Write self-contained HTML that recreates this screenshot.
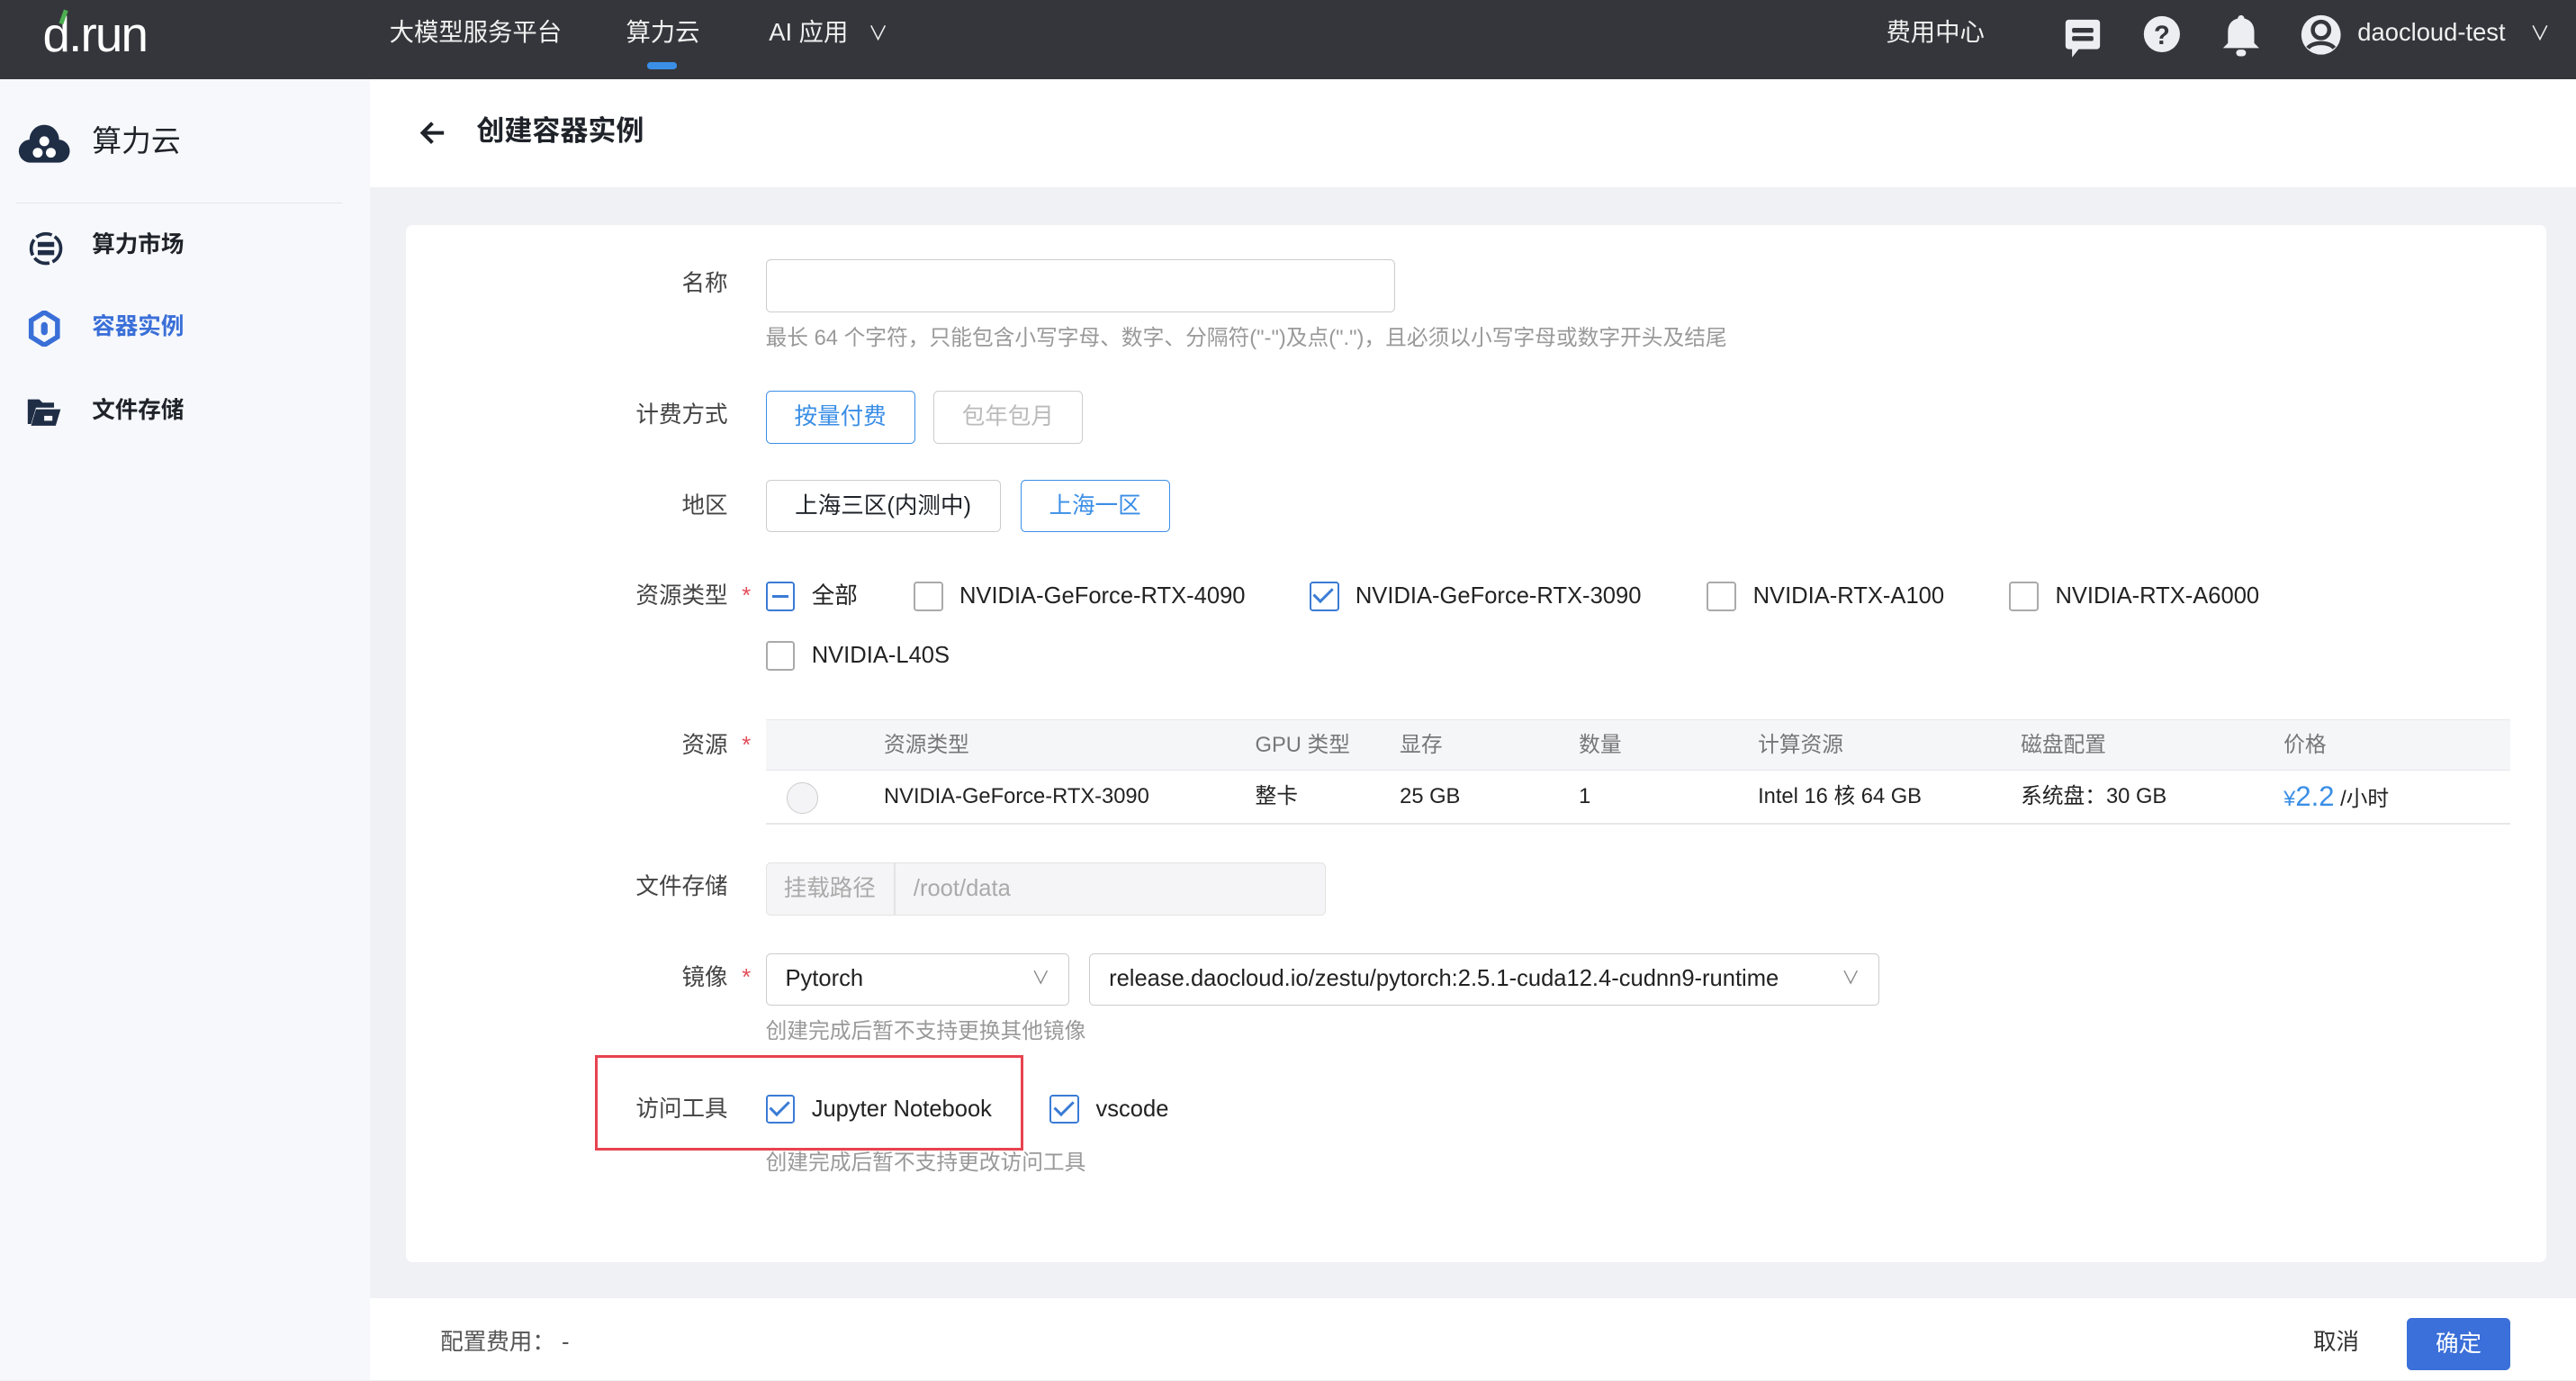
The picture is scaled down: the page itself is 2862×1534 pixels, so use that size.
<!DOCTYPE html>
<html><head><meta charset="utf-8">
<style>
html{zoom:1.8253}
*{box-sizing:border-box;margin:0;padding:0}
body{width:1568px;height:840px;overflow:hidden;position:relative;background:#f0f1f4;font-family:"Liberation Sans","Noto Sans CJK SC",sans-serif;font-size:14px;line-height:18px;color:#1f2329}
.a{position:absolute}
.top{left:0;top:0;width:1568px;height:48px;background:#35363b;color:#fff}
.top .t{position:absolute;top:11px;font-size:15px;color:#f0f0f0}
.side{left:0;top:48px;width:225px;height:792px;background:#f6f8fb}
.lbl{position:absolute;right:1125px;font-size:14px;color:#444;text-align:right;white-space:nowrap}
.req::after{content:"*";color:#e34d59;position:absolute;right:-14px;top:0px}
.btn{position:absolute;height:32px;border:1px solid #ccc;border-radius:3px;display:flex;align-items:center;justify-content:center;font-size:14px}
.cb{position:absolute;width:18px;height:18px;border:1.5px solid #aaa;border-radius:2px;background:#fff}
.cb.on{border-color:#3a7bd5}
.cb.on::after{content:"";position:absolute;left:4px;top:0px;width:5px;height:10px;border:solid #3a7bd5;border-width:0 2px 2px 0;transform:rotate(45deg)}
.ct{position:absolute;font-size:14px;color:#222}
.hint{position:absolute;font-size:13px;color:#999}
.th{position:absolute;top:445px;font-size:13px;color:#777}
.td{position:absolute;top:476px;font-size:13px;color:#222}
</style></head><body>
<div class="a top">
  <div class="a" style="left:26px;top:4px;font-size:30px;line-height:34px;color:#fff;letter-spacing:-1px">d.run</div>
  <div class="a" style="left:37px;top:6px;width:3px;height:9px;background:#4caf50;transform:rotate(20deg)"></div>
  <div class="t" style="left:237px">大模型服务平台</div>
  <div class="t" style="left:381px">算力云</div>
  <div class="a" style="left:394px;top:38px;width:18px;height:4px;border-radius:2px;background:#3a8ee6"></div>
  <div class="t" style="left:468px">AI 应用 <span style="margin-left:8px;font-size:12px">∨</span></div>
  <div class="t" style="left:1148px">费用中心</div>
  <svg class="a" style="left:1256px;top:11px" width="23" height="25" viewBox="0 0 23 25"><path d="M3 1h17a2 2 0 0 1 2 2v14a2 2 0 0 1-2 2H9l-4 5v-5H3a2 2 0 0 1-2-2V3a2 2 0 0 1 2-2z" fill="#eceef2"/><rect x="5" y="6" width="13" height="3" rx="1" fill="#35363b"/><rect x="5" y="11" width="13" height="3" rx="1" fill="#35363b"/></svg>
  <svg class="a" style="left:1304px;top:9px" width="24" height="24" viewBox="0 0 24 24"><circle cx="12" cy="12" r="11" fill="#eceef2"/><text x="12" y="18" font-size="16" font-weight="bold" text-anchor="middle" fill="#35363b" font-family="Liberation Sans">?</text></svg>
  <svg class="a" style="left:1352px;top:8px" width="24" height="27" viewBox="0 0 24 27"><path d="M12 1c1 0 2 1 2 2 4 1 6 4 6 8v7l3 3H1l3-3v-7c0-4 2-7 6-8 0-1 1-2 2-2z" fill="#eceef2"/><rect x="9" y="22" width="6" height="4" rx="2" fill="#eceef2"/></svg>
  <svg class="a" style="left:1400px;top:8px" width="26" height="26" viewBox="0 0 26 26"><circle cx="13" cy="13" r="12" fill="#eceef2"/><circle cx="13" cy="10" r="5" fill="none" stroke="#35363b" stroke-width="2.5"/><path d="M5 21c3-4 13-4 16 0" fill="none" stroke="#35363b" stroke-width="2.5"/></svg>
  <div class="t" style="left:1435px;font-size:15px">daocloud-test</div>
  <div class="t" style="left:1540px;font-size:12px;top:12px">∨</div>
</div>
<div class="a side">
  <svg class="a" style="left:11px;top:26px" width="32" height="26" viewBox="0 0 32 26"><path d="M8 25a7 7 0 0 1-1-14 9 9 0 0 1 18 0 7 7 0 0 1-1 14z" fill="#1f2d45"/><circle cx="16" cy="12" r="3" fill="#fff"/><circle cx="12" cy="19" r="3" fill="#fff"/><circle cx="20" cy="19" r="3" fill="#fff"/></svg>
  <div class="a" style="left:56px;top:27px;font-size:18px;line-height:22px;color:#1f2329">算力云</div>
  <div class="a" style="left:10px;top:75px;width:198px;height:1px;background:#e3e5ea"></div>
  <svg class="a" style="left:17px;top:92px" width="22" height="22" viewBox="0 0 22 22"><circle cx="11" cy="11" r="9" fill="none" stroke="#1f2d45" stroke-width="2" stroke-dasharray="10 2"/><rect x="6" y="7" width="10" height="3" fill="#1f2d45"/><rect x="6" y="12" width="10" height="3" fill="#1f2d45"/></svg>
  <div class="a" style="left:56px;top:92px;font-size:14px;font-weight:bold;color:#1f2329">算力市场</div>
  <svg class="a" style="left:17px;top:141px" width="20" height="22" viewBox="0 0 20 22"><path d="M10 1l8 5v10l-8 5-8-5V6z" fill="none" stroke="#3a6fd8" stroke-width="3"/><rect x="8" y="7" width="4" height="8" rx="2" fill="#3a6fd8"/></svg>
  <div class="a" style="left:56px;top:142px;font-size:14px;font-weight:bold;color:#3a6fd8">容器实例</div>
  <svg class="a" style="left:16px;top:193px" width="22" height="19" viewBox="0 0 22 19"><path d="M1 2h7l2 2h7v3H6L3 17H1z" fill="#1f2d45"/><path d="M6 8h15l-3 10H3z" fill="#1f2d45"/><rect x="11" y="12" width="5" height="3" fill="#f6f8fb"/></svg>
  <div class="a" style="left:56px;top:193px;font-size:14px;font-weight:bold;color:#1f2329">文件存储</div>
</div>
<div class="a" style="left:225px;top:48px;width:1343px;height:66px;background:#fff"></div>
<svg class="a" style="left:254px;top:73px" width="18" height="16" viewBox="0 0 18 16"><path d="M16 8H3M9 2L3 8l6 6" fill="none" stroke="#1f2329" stroke-width="2.2"/></svg>
<div class="a" style="left:290px;top:70px;font-size:17px;line-height:20px;font-weight:bold">创建容器实例</div>
<div class="a" style="left:247px;top:137px;width:1303px;height:631px;background:#fff;border-radius:4px"></div>

<div class="lbl" style="top:164px">名称</div>
<div class="a" style="left:466px;top:158px;width:383px;height:32px;border:1px solid #ccc;border-radius:3px"></div>
<div class="hint" style="left:466px;top:197px">最长 64 个字符，只能包含小写字母、数字、分隔符("-")及点(".")，且必须以小写字母或数字开头及结尾</div>

<div class="lbl" style="top:244px">计费方式</div>
<div class="btn" style="left:466px;top:238px;width:91px;border-color:#3a8ee6;color:#3a8ee6">按量付费</div>
<div class="btn" style="left:568px;top:238px;width:91px;color:#bbb">包年包月</div>

<div class="lbl" style="top:299px">地区</div>
<div class="btn" style="left:466px;top:292px;width:143px">上海三区(内测中)</div>
<div class="btn" style="left:621px;top:292px;width:91px;border-color:#3a8ee6;color:#3a8ee6">上海一区</div>

<div class="lbl req" style="top:354px">资源类型</div>
<div class="cb" style="left:466px;top:354px;border-color:#3a7bd5"></div>
<div class="a" style="left:470px;top:362px;width:10px;height:2px;background:#3a7bd5"></div>
<div class="ct" style="left:494px;top:354px">全部</div>
<div class="cb" style="left:556px;top:354px"></div><div class="ct" style="left:584px;top:354px">NVIDIA-GeForce-RTX-4090</div>
<div class="cb on" style="left:797px;top:354px"></div><div class="ct" style="left:825px;top:354px">NVIDIA-GeForce-RTX-3090</div>
<div class="cb" style="left:1039px;top:354px"></div><div class="ct" style="left:1067px;top:354px">NVIDIA-RTX-A100</div>
<div class="cb" style="left:1223px;top:354px"></div><div class="ct" style="left:1251px;top:354px">NVIDIA-RTX-A6000</div>
<div class="cb" style="left:466px;top:390px"></div><div class="ct" style="left:494px;top:390px">NVIDIA-L40S</div>

<div class="lbl req" style="top:445px">资源</div>
<div class="a" style="left:466px;top:438px;width:1062px;height:31px;background:#f5f6f8;border-top:1px solid #e8e8e8;border-bottom:1px solid #e8e8e8"></div>
<div class="a" style="left:466px;top:501px;width:1062px;height:1px;background:#e8e8e8"></div>
<div class="th" style="left:538px">资源类型</div><div class="th" style="left:764px">GPU 类型</div><div class="th" style="left:852px">显存</div><div class="th" style="left:961px">数量</div><div class="th" style="left:1070px">计算资源</div><div class="th" style="left:1230px">磁盘配置</div><div class="th" style="left:1390px">价格</div>
<div class="a" style="left:479px;top:476px;width:19px;height:19px;border:1px solid #ccc;border-radius:50%;background:#f4f4f6"></div>
<div class="td" style="left:538px">NVIDIA-GeForce-RTX-3090</div><div class="td" style="left:764px">整卡</div><div class="td" style="left:852px">25 GB</div><div class="td" style="left:961px">1</div><div class="td" style="left:1070px">Intel 16 核 64 GB</div><div class="td" style="left:1230px">系统盘：30 GB</div>
<div class="td" style="left:1390px;top:475px;line-height:20px"><span style="color:#3a8ee6;font-size:13px">¥</span><span style="color:#3a8ee6;font-size:17px">2.2</span> /小时</div>

<div class="lbl" style="top:531px">文件存储</div>
<div class="a" style="left:466px;top:525px;width:341px;height:32px;background:#f5f5f7;border:1px solid #e3e3e3;border-radius:3px"></div>
<div class="a" style="left:544px;top:525px;width:1px;height:32px;background:#e3e3e3"></div>
<div class="hint" style="left:477px;top:532px;font-size:14px;color:#aaa">挂载路径</div>
<div class="hint" style="left:556px;top:532px;font-size:14px;color:#aaa">/root/data</div>

<div class="lbl req" style="top:586px">镜像</div>
<div class="a" style="left:466px;top:580px;width:185px;height:32px;border:1px solid #ccc;border-radius:3px"></div>
<div class="ct" style="left:478px;top:587px">Pytorch</div>
<div class="ct" style="left:628px;top:587px;color:#888;font-size:11px">∨</div>
<div class="a" style="left:663px;top:580px;width:481px;height:32px;border:1px solid #ccc;border-radius:3px"></div>
<div class="ct" style="left:675px;top:587px">release.daocloud.io/zestu/pytorch:2.5.1-cuda12.4-cudnn9-runtime</div>
<div class="ct" style="left:1121px;top:587px;color:#888;font-size:11px">∨</div>
<div class="hint" style="left:466px;top:619px">创建完成后暂不支持更换其他镜像</div>

<div class="a" style="left:362px;top:642px;width:261px;height:58px;border:2px solid #e8434f"></div>
<div class="lbl" style="top:666px">访问工具</div>
<div class="cb on" style="left:466px;top:666px"></div><div class="ct" style="left:494px;top:666px">Jupyter Notebook</div>
<div class="cb on" style="left:639px;top:666px"></div><div class="ct" style="left:667px;top:666px">vscode</div>
<div class="hint" style="left:466px;top:699px">创建完成后暂不支持更改访问工具</div>

<div class="a" style="left:225px;top:790px;width:1343px;height:50px;background:#fff"></div>
<div class="a" style="left:268px;top:808px;font-size:14px;color:#555">配置费用：&nbsp;-</div>
<div class="a" style="left:1408px;top:808px;font-size:14px;color:#333">取消</div>
<div class="a" style="left:1465px;top:802px;width:63px;height:32px;background:#3b6fd9;border-radius:3px;color:#fff;font-size:14px;display:flex;align-items:center;justify-content:center">确定</div>
</body></html>
